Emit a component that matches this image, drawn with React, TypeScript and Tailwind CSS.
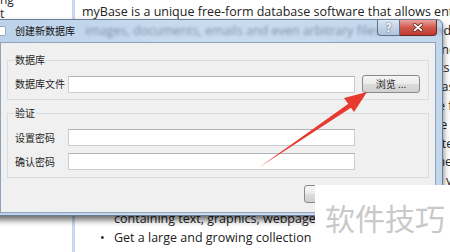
import React from 'react';

const cjk = "font-['Noto_Sans_CJK_SC',sans-serif]";

function Row({ label }: { label: string }) {
  return (
    <div className="flex items-center h-[17px]">
      <span className="w-[54px] pl-[1px] text-[10px] leading-[12px] text-[#1e1e1e]">{label}</span>
      <div className="w-[287px] h-[17px] bg-white border border-[#c9ced6] border-t-[#aeb3ba]" />
    </div>
  );
}

function WinButton({ label, className }: { label: string; className: string }) {
  return (
    <button
      className={`h-[18px] rounded-[3px] border border-[#8a8a8a] bg-[linear-gradient(#f5f5f5,#ebebeb_50%,#dcdcdc_51%,#d0d0d0)] text-[10px] leading-[12px] text-[#1e1e1e] ${className}`}
    >
      {label}
    </button>
  );
}

export default function App() {
  const lines = [
    'myBase is a unique free-form database software that allows entries',
    'images, documents, emails and even arbitrary files to be stored and',
    'organized in a tree-like structure, so you can easily build your notes',
    'collection. Write, edit and search through them quickly. With its power',
    'search engine, you can find exactly what you want in seconds as the data',
    'grows over time, and all items are saved in one single portable file',
    'so it is easy to carry and back up. Use it as a personal database or',
    'a knowledge base for your team with simple and clean user interface.',
    'Key features of this program include the following items that help',
    'you work faster with your documents and organize everything you Want',
    'Build an outline of information of your own choice that can hold',
  ];

  return (
    <div className="relative w-[450px] h-[252px] overflow-hidden bg-white font-['Open_Sans',sans-serif] text-[#222]">
      {/* page behind the dialog */}
      <div className="flex h-full">
        <aside className="w-[75px] shrink-0 border-r-[3px] border-[#c6d9f1] -mt-[7px] text-[12px] leading-[14px]">
          <div>ng</div>
          <div>t</div>
        </aside>
        <main className="flex-1 pl-[7px] pt-[3px] text-[12.5px] leading-[18.8px] whitespace-nowrap">
          {lines.map((l, i) => (
            <div key={i}>{l}</div>
          ))}
          <div className="pl-[32px]">containing text, graphics, webpages and more</div>
          <div className="flex">
            <span className="w-[32px] pl-[18px]">•</span>
            <span>Get a large and growing collection</span>
          </div>
        </main>
      </div>

      {/* dialog window */}
      <div className={`absolute left-[-8px] top-[19px] w-[451px] h-[197px] flex flex-col rounded-t-[6px] border border-[#6b7e95] bg-[linear-gradient(90deg,#bcd2ea,#cadcef_50%,#c2d6ec)] shadow-[0_4px_6px_rgba(0,0,0,0.6)] ${cjk}`}>
        <div className="relative h-[22px] flex items-center overflow-hidden">
          <div className="absolute left-[92px] top-[1px] text-[12.5px] leading-[19px] whitespace-nowrap font-['Open_Sans',sans-serif] text-[#34465c] opacity-50 blur-[1.4px]">
            images, documents, emails and even arbitrary files to be stored
          </div>
          <div className="relative ml-[2px] w-[11px] h-[10px] rounded-[2px] bg-white border border-[#9aa9bb]" />
          <span className="relative ml-[9px] text-[10px] leading-[12px] text-[#111]">创建新数据库</span>
          <div className="relative ml-auto mr-[5px] self-start flex">
            <div className="w-[23px] h-[16px] rounded-bl-[4px] border border-t-0 border-[#5f7189] bg-[linear-gradient(#dce7f3,#c3d4e7_50%,#aec3da)] flex items-center justify-center text-[11px] leading-[11px] text-white font-bold [text-shadow:0_0_2px_#334]">
              ?
            </div>
            <div className="w-[37px] h-[16px] rounded-br-[4px] border border-l-0 border-t-0 border-[#6a2a24] bg-[linear-gradient(#e9a79f,#d3584c_50%,#c23a2e)] flex items-center justify-center">
              <svg width="10" height="9" viewBox="0 0 10 9">
                <path d="M1.5 1.5 L8.5 7.5 M8.5 1.5 L1.5 7.5" stroke="#4a1510" strokeWidth="3" strokeLinecap="round" />
                <path d="M1.5 1.5 L8.5 7.5 M8.5 1.5 L1.5 7.5" stroke="#ffffff" strokeWidth="1.8" strokeLinecap="round" />
              </svg>
            </div>
          </div>
        </div>

        <div className="flex-1 ml-[7px] mr-[6px] mb-[2px] bg-[#f0f0f0] border border-[#8ea2b9] px-[6px] flex flex-col">
          <fieldset className="mt-[11px] border border-[#d9dde2] pl-[6px] pt-[9px] pb-[6px]">
            <legend className="px-[1px] text-[10px] leading-[12px] text-[#1e1e1e]">数据库</legend>
            <div className="flex items-center">
              <Row label="数据库文件" />
              <WinButton label="浏览 ..." className="ml-[7px] w-[58px] h-[17px]" />
            </div>
          </fieldset>

          <fieldset className="mt-[7px] border border-[#d9dde2] pl-[6px] pt-[10px] pb-[7px]">
            <legend className="px-[1px] text-[10px] leading-[12px] text-[#1e1e1e]">验证</legend>
            <div className="flex flex-col gap-[7px]">
              <Row label="设置密码" />
              <Row label="确认密码" />
            </div>
          </fieldset>

          <div className="mt-[7px] mr-[2px] flex justify-end gap-[3px]">
            <WinButton label="确定" className="w-[60px]" />
            <WinButton label="取消" className="w-[60px]" />
          </div>
        </div>
      </div>

      {/* red arrow */}
      <svg className="absolute inset-0 pointer-events-none" width="450" height="252">
        <path d="M259 167.5 L350.5 102.2 L353.3 106.2 Z" fill="#e8392f" />
        <path d="M367 92 L344 98 L354 112 Z" fill="#e8392f" />
      </svg>

      {/* watermark */}
      <div className={`absolute left-[315px] top-[185px] right-0 bottom-0 bg-white flex items-start pl-[10px] pt-[13px] ${cjk}`}>
        <span className="text-[30px] leading-[38px] text-[#c9c9c9]">软件技巧</span>
      </div>
    </div>
  );
}
